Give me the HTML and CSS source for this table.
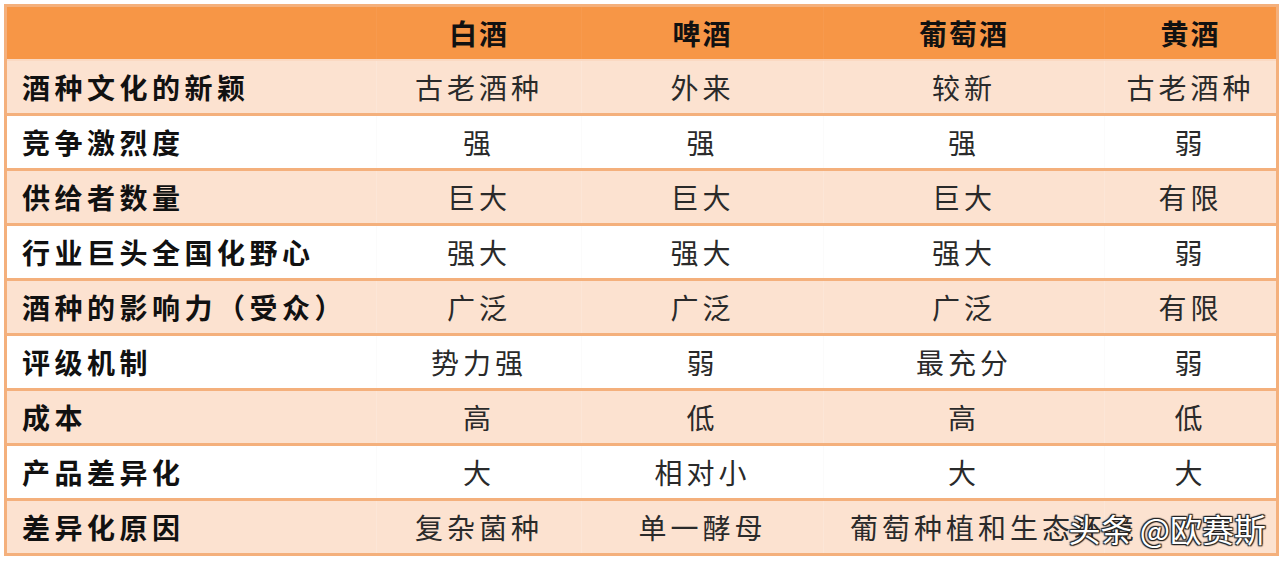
FILE: index.html
```html
<!DOCTYPE html>
<html lang="zh">
<head>
<meta charset="utf-8">
<link rel="stylesheet" href="styles.css">
</head>
<body>
<div class="wrap">
<table class="tbl">
  <colgroup>
    <col class="c0"><col class="c1"><col class="c2"><col class="c3"><col class="c4">
  </colgroup>
  <thead>
    <tr><th></th><th>白酒</th><th>啤酒</th><th>葡萄酒</th><th>黄酒</th></tr>
  </thead>
  <tbody>
    <tr class="alt"><td class="lbl">酒种文化的新颖</td><td>古老酒种</td><td>外来</td><td>较新</td><td>古老酒种</td></tr>
    <tr><td class="lbl">竞争激烈度</td><td>强</td><td>强</td><td>强</td><td>弱</td></tr>
    <tr class="alt"><td class="lbl">供给者数量</td><td>巨大</td><td>巨大</td><td>巨大</td><td>有限</td></tr>
    <tr><td class="lbl">行业巨头全国化野心</td><td>强大</td><td>强大</td><td>强大</td><td>弱</td></tr>
    <tr class="alt"><td class="lbl">酒种的影响力（受众）</td><td>广泛</td><td>广泛</td><td>广泛</td><td>有限</td></tr>
    <tr><td class="lbl">评级机制</td><td>势力强</td><td>弱</td><td>最充分</td><td>弱</td></tr>
    <tr class="alt"><td class="lbl">成本</td><td>高</td><td>低</td><td>高</td><td>低</td></tr>
    <tr><td class="lbl">产品差异化</td><td>大</td><td>相对小</td><td>大</td><td>大</td></tr>
    <tr class="alt"><td class="lbl">差异化原因</td><td>复杂菌种</td><td>单一酵母</td><td class="over">葡萄种植和生态环境</td><td></td></tr>
  </tbody>
</table>
<div class="mark">头条 @欧赛斯</div>
</div>
</body>
</html>
```

FILE: styles.css
```css
html, body {
  margin: 0;
  padding: 0;
  background: #ffffff;
}
.wrap {
  position: relative;
  width: 1280px;
  height: 563px;
  overflow: hidden;
  padding: 4px 0 0 4px;
  box-sizing: border-box;
}
.tbl {
  border-collapse: collapse;
  width: 1272px;
  table-layout: fixed;
  border: 3px solid #f4b07c;
  font-family: "Noto Sans CJK SC", "Noto Sans", sans-serif;
  font-size: 28px;
  color: #1a1a1a;
}
.c0 { width: 371px; }
.c1 { width: 205px; }
.c2 { width: 242px; }
.c3 { width: 281px; }
.c4 { width: 173px; }
.tbl th {
  background: #f79646;
  height: 52px;
  padding: 0;
  font-weight: 700;
  text-align: center;
  letter-spacing: 2px;
  color: #111;
  border-left: 1px solid #f79a4e;
}
.tbl th:first-child { border-left: none; }
.tbl td {
  height: 52px;
  padding: 0;
  text-align: center;
  letter-spacing: 4px;
  font-weight: 400;
  color: #2a2a2a;
  border-top: 3px solid #f4b07c;
  border-left: 1px solid #fbfbfb;
  white-space: nowrap;
}
.tbl tbody tr:first-child td { border-top: 2px solid #fbd9c2; }
.tbl tr.alt td { background: #fce2d0; border-left-color: #fce6d7; }
.tbl td.lbl {
  text-align: left;
  padding-left: 15px;
  font-weight: 700;
  letter-spacing: 4.5px;
  color: #111;
  border-left: none;
}
.tbl td.over {
  text-align: left;
  padding-left: 26px;
  overflow: visible;
}
.mark {
  position: absolute;
  right: 14px;
  bottom: 12px;
  font-family: "Noto Sans CJK SC", "Noto Sans", sans-serif;
  font-size: 32px;
  color: #ffffff;
  letter-spacing: 0;
  text-shadow: 0 0 2px #222, 1px 1px 1px #222, -1px -1px 1px #222, 1px -1px 1px #222, -1px 1px 1px #222;
}
```
